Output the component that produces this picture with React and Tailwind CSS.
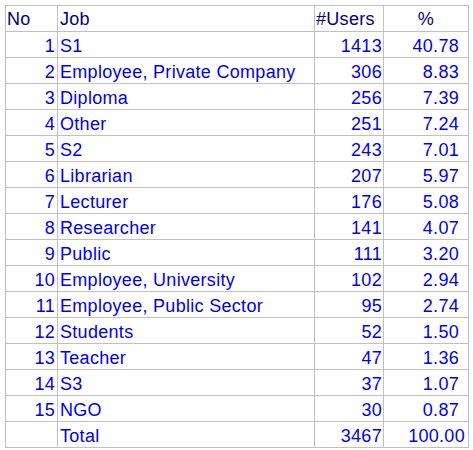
const rows = [
  [1, "S1", 1413, "40.78"],
  [2, "Employee, Private Company", 306, "8.83"],
  [3, "Diploma", 256, "7.39"],
  [4, "Other", 251, "7.24"],
  [5, "S2", 243, "7.01"],
  [6, "Librarian", 207, "5.97"],
  [7, "Lecturer", 176, "5.08"],
  [8, "Researcher", 141, "4.07"],
  [9, "Public", 111, "3.20"],
  [10, "Employee, University", 102, "2.94"],
  [11, "Employee, Public Sector", 95, "2.74"],
  [12, "Students", 52, "1.50"],
  [13, "Teacher", 47, "1.36"],
  [14, "S3", 37, "1.07"],
  [15, "NGO", 30, "0.87"],
];

const cell = "border border-[#c0c0c0] h-[26px] p-0 align-bottom leading-[20px]";

export default function App() {
  return (
    <div className="bg-white w-[473px] h-[450px] pt-[5px] pl-[5px] font-['Liberation_Sans',Arial,sans-serif] text-[18px] tracking-[0.3px]">
      <table className="border-collapse table-fixed w-[463px]">
        <colgroup>
          <col className="w-[52px]" />
          <col className="w-[257px]" />
          <col className="w-[69px]" />
          <col className="w-[85px]" />
        </colgroup>
        <thead>
          <tr className="text-[#000080]">
            <th className={`${cell} pb-[2px] font-normal text-left pl-[1px]`}>No</th>
            <th className={`${cell} pb-[2px] font-normal text-left pl-[2px]`}>Job</th>
            <th className={`${cell} pb-[2px] font-normal text-left pl-[1px]`}>#Users</th>
            <th className={`${cell} pb-[2px] font-normal text-center`}>%</th>
          </tr>
        </thead>
        <tbody className="text-[#0000f0]">
          {rows.map(([no, job, users, pct]) => (
            <tr key={no}>
              <td className={`${cell} pb-[1px] text-right pr-[2px]`}>{no}</td>
              <td className={`${cell} pb-[1px] text-left pl-[2px] whitespace-nowrap`}>{job}</td>
              <td className={`${cell} pb-[1px] text-right pr-[1px]`}>{users}</td>
              <td className={`${cell} pb-[1px] text-right pr-[9px]`}>{pct}</td>
            </tr>
          ))}
          <tr>
            <td className={`${cell} pb-[1px]`}></td>
            <td className={`${cell} pb-[1px] text-left pl-[2px]`}>Total</td>
            <td className={`${cell} pb-[1px] text-right pr-[1px]`}>3467</td>
            <td className={`${cell} pb-[1px] text-right pr-[3px]`}>100.00</td>
          </tr>
        </tbody>
      </table>
    </div>
  );
}
